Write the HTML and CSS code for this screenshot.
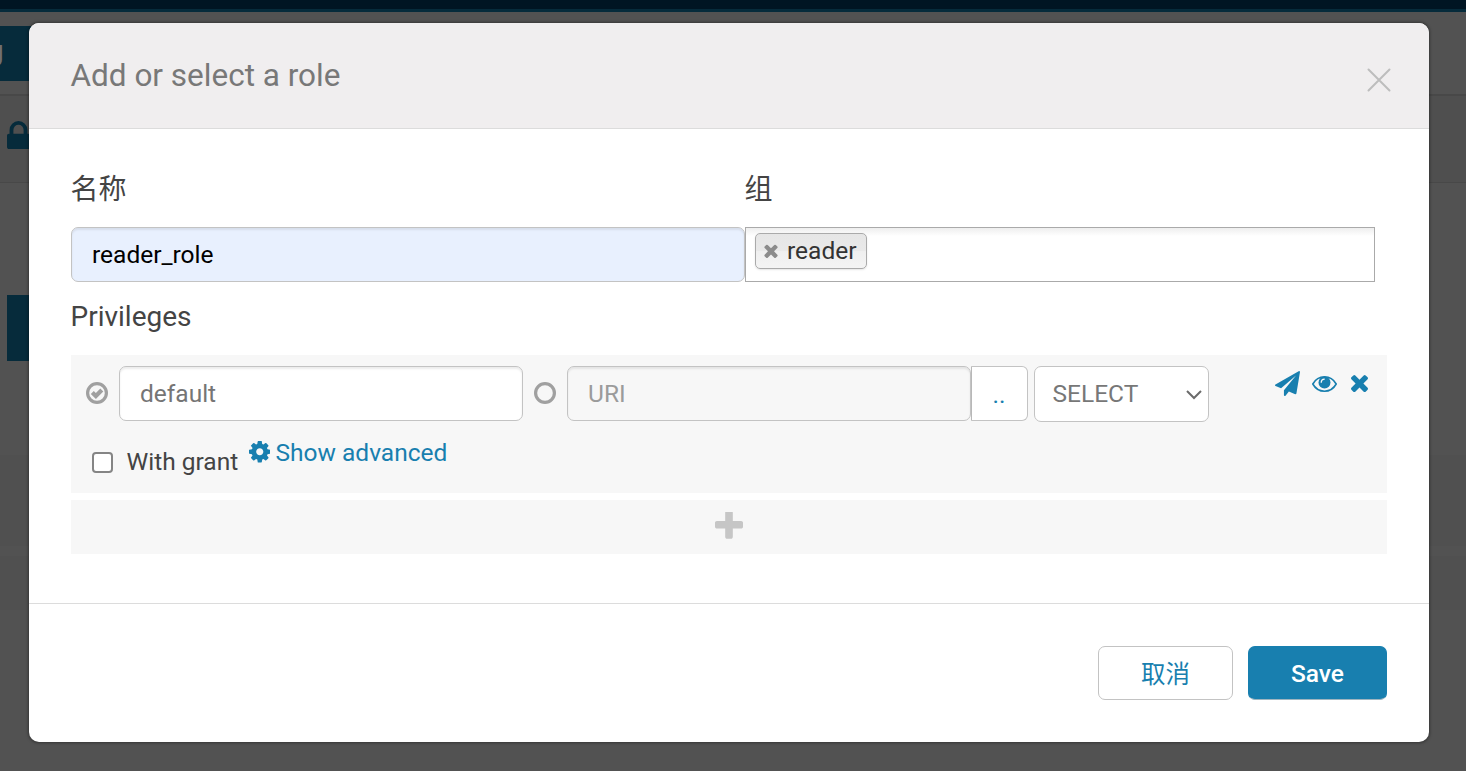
FILE: index.html
```html
<!DOCTYPE html>
<html lang="zh-CN">
<head>
<meta charset="utf-8">
<title>Add or select a role</title>
<link rel="stylesheet" href="styles.css">
</head>
<body>
<div class="page">
  <div class="topbar"></div>
  <div class="page-tabs"><div class="page-tab">g</div></div>
  <div class="page-title">
    <svg class="lock" viewBox="320 128 1152 1408" preserveAspectRatio="none"><path d="M640 768h512v-192q0-106-75-181t-181-75-181 75-75 181v192zm832 96v576q0 40-28 68t-68 28h-960q-40 0-68-28t-28-68v-576q0-40 28-68t68-28h32v-192q0-184 132-316t316-132 316 132 132 316v192h32q40 0 68 28t28 68z"/></svg>
  </div>
  <div class="page-block"></div>
  <div class="page-row row-one"></div>
  <div class="page-row row-two"></div>
</div>

<div class="modal">
  <header class="modal-header">
    <h2 class="modal-title">Add or select a role</h2>
    <svg class="close" viewBox="0 0 24 24"><path d="M1.5 1.5l21 21M22.5 1.5l-21 21"/></svg>
  </header>

  <div class="modal-body">
    <div class="fields">
      <div class="field">
        <div class="label">名称</div>
        <input class="input role-name" type="text" value="reader_role">
      </div>
      <div class="field">
        <div class="label">组</div>
        <div class="groups">
          <span class="chip">
            <svg class="chip-x" viewBox="302 302 1188 1252"><path d="M1490 1322q0 40-28 68l-136 136q-28 28-68 28t-68-28l-294-294-294 294q-28 28-68 28t-68-28l-136-136q-28-28-28-68t28-68l294-294-294-294q-28-28-28-68t28-68l136-136q28-28 68-28t68 28l294 294 294-294q28-28 68-28t68 28l136 136q28 28 28 68t-28 68l-294 294 294 294q28 28 28 68z"/></svg>
            <span>reader</span>
          </span>
        </div>
      </div>
    </div>

    <div class="label privileges-label">Privileges</div>

    <div class="privilege">
      <div class="privilege-main">
        <svg class="radio" viewBox="0 0 22 22"><circle cx="11" cy="11" r="9.4"/><path class="tick" d="M6.300 10.400l3.600 3.600 5.900-5.900"/></svg>
        <input class="input" type="text" placeholder="default">
        <svg class="radio radio-uri" viewBox="0 0 22 22"><circle cx="11" cy="11" r="9.4"/></svg>
        <input class="input uri" type="text" placeholder="URI" disabled>
        <div class="browse">..</div>
        <div class="select"><span>SELECT</span><svg class="caret" viewBox="0 0 16 10"><path d="M1 1l7 7 7-7"/></svg></div>
        <div class="actions">
          <svg class="plane" viewBox="0 0 1792 1792"><path d="M1764 11q33 24 27 64l-256 1536q-5 29-32 45-14 8-31 8-11 0-24-5l-453-185-242 295q-18 23-49 23-13 0-22-4-19-7-30.500-23.500t-11.500-36.500v-349l864-1059-1069 925-395-162q-37-14-40-55-2-40 32-59l1664-960q15-9 32-9 20 0 36 11z"/></svg>
          <svg class="eye" viewBox="0 0 25 16"><path class="lid" d="M.8 8C3.500 3.200 7.800.8 12.500.8S21.500 3.200 24.200 8c-2.700 4.800-7 7.200-11.700 7.200S3.500 12.800.8 8z"/><circle cx="12.500" cy="6.500" r="6"/><path class="glint" d="M9.200 6.300q.1-3 3.100-3.200"/></svg>
          <svg class="remove" viewBox="302 334 1188 1188"><path d="M1490 1322q0 40-28 68l-136 136q-28 28-68 28t-68-28l-294-294-294 294q-28 28-68 28t-68-28l-136-136q-28-28-28-68t28-68l294-294-294-294q-28-28-28-68t28-68l136-136q28-28 68-28t68 28l294 294 294-294q28-28 68-28t68 28l136 136q28 28 28 68t-28 68l-294 294 294 294q28 28 28 68z" transform="translate(0 -100)"/></svg>
        </div>
      </div>
      <div class="privilege-options">
        <span class="checkbox"></span>
        <span class="grant">With grant</span>
        <a class="advanced"><svg class="cog" viewBox="128 128 1536 1536"><path d="M1152 896q0-106-75-181t-181-75-181 75-75 181 75 181 181 75 181-75 75-181zm512-109v222q0 12-8 23t-20 13l-185 28q-19 54-39 91 35 50 107 138 10 12 10 25t-9 23q-27 37-99 108t-94 71q-12 0-26-9l-138-108q-44 23-91 38-16 136-29 186-7 28-36 28h-222q-14 0-24.500-8.500t-11.500-21.500l-28-184q-49-16-90-37l-141 107q-10 9-25 9-14 0-25-11-126-114-165-168-7-10-7-23 0-12 8-23 15-21 51-66.500t54-70.500q-27-50-41-99l-183-27q-13-2-21-12.500t-8-23.500v-222q0-12 8-23t19-13l186-28q14-46 39-92-40-57-107-138-10-12-10-24 0-10 9-23 26-36 98.500-107.500t94.500-71.500q13 0 26 10l138 107q44-23 91-38 16-136 29-186 7-28 36-28h222q14 0 24.500 8.500t11.500 21.500l28 184q49 16 90 37l142-107q9-9 24-9 13 0 25 10 129 119 165 170 7 8 7 22 0 12-8 23-15 21-51 66.500t-54 70.500q26 50 41 98l183 28q13 2 21 12.500t8 23.500z"/></svg><span>Show advanced</span></a>
      </div>
    </div>

    <div class="add">
      <svg class="plus" viewBox="192 192 1408 1408"><path d="M1600 736v192q0 40-28 68t-68 28h-416v416q0 40-28 68t-68 28h-192q-40 0-68-28t-28-68v-416h-416q-40 0-68-28t-28-68v-192q0-40 28-68t68-28h416v-416q0-40 28-68t68-28h192q40 0 68 28t28 68v416h416q40 0 68 28t28 68z"/></svg>
    </div>
  </div>

  <footer class="modal-footer">
    <div class="btn">取消</div>
    <div class="btn btn-primary">Save</div>
  </footer>
</div>
</body>
</html>
```
FILE: styles.css
```css
* { box-sizing: border-box; }
html, body { margin: 0; height: 771px; overflow: hidden; }
body {
  background: #525252;
  font-family: Roboto, "Noto Sans CJK SC", sans-serif;
  font-size: 24.5px;
  color: #444;
}
svg { display: block; flex: none; }

.page { position: absolute; inset: 0; overflow: hidden; }
.topbar { height: 12px; background: #001523; border-bottom: 3px solid #062b3b; }
.page-tabs { height: 84px; padding-top: 14px; border-bottom: 2px solid #484848; }
.page-tab {
  width: 40px; height: 55px;
  background: #062b3b; color: #707070;
  font-size: 28px; line-height: 49px; text-indent: -12px;
  overflow: hidden;
}
.page-title { height: 87px; padding: 25px 7px; background: #4f4f4f; border-bottom: 1px solid #484848; }
.lock { width: 23px; height: 28px; fill: #062b3b; }
.page-block { width: 40px; height: 66px; margin: 112px 0 0 7px; background: #062b3b; }
.page-row { background: #505050; }
.row-one { height: 91px; margin-top: 94px; }
.row-two { height: 54px; margin-top: 10px; }

.modal {
  position: absolute; left: 29px; top: 23px;
  width: 1400px; height: 719px;
  display: flex; flex-direction: column;
  background: #fff; border-radius: 10px; overflow: hidden;
  box-shadow: 0 0 3px 1px rgba(0, 0, 0, .35);
}
.modal-header {
  height: 106px; flex: none;
  display: flex; justify-content: space-between;
  padding: 33px 38px 0 41.500px;
  background: #f0eeef; border-bottom: 1px solid #dcdcdc;
}
.modal-title { margin: 0; font-size: 31.5px; font-weight: 400; line-height: 40px; color: #787878; }
.close { width: 24px; height: 24px; margin-top: 12px; stroke: #bdbdbd; stroke-width: 2; stroke-linecap: round; }

.modal-body { height: 474px; flex: none; padding: 42px 42px 0 41.500px; }
.fields { display: grid; grid-template-columns: 674px 630px; }
.label { height: 36px; line-height: 38px; font-size: 28px; }
.field .label { margin-bottom: 20px; }
.input {
  display: block; width: 100%; height: 55px; min-width: 0;
  padding: 0 20.500px; margin: 0;
  font: inherit; color: #000;
  background: #fff; border: 1px solid #c3c3c3; border-radius: 7px;
  box-shadow: inset 0 2px 2px rgba(0, 0, 0, .075);
  outline: 0;
}
.input::placeholder { color: #757575; opacity: 1; }
.role-name { background: #e8f0fe; }
.groups {
  height: 55px; padding: 5px 9px;
  border: 1px solid #aaa;
  background: linear-gradient(#eee 0, #fff 8px);
}
.chip {
  display: inline-flex; align-items: center; gap: 9.500px;
  width: 112px; height: 36px; padding: 0 0 0 8px;
  color: #333; line-height: 34px;
  border: 1px solid #aaa; border-radius: 5px;
  background: linear-gradient(#e6e6e6, #e9e9e9 50%, #efefef 50%, #f4f4f4);
  box-shadow: 0 1px 2px rgba(0, 0, 0, .1);
}
.chip-x { width: 14px; height: 14px; fill: #8c8c8c; }

.privileges-label { margin: 16px 0 21px; }
.privilege { width: 1316.500px; height: 138px; padding-top: 11px; background: #f7f7f7; }
.privilege-main {
  display: grid;
  grid-template-columns: 48px 404px 44px 404px 57px 175px 1fr;
  align-items: start;
}
.radio { width: 22px; height: 22px; margin: 16px 0 0 15.500px; fill: none; stroke: #a0a0a0; stroke-width: 3.200; }
.radio-uri { margin-left: 11.500px; }
.tick { stroke-width: 4.200; }
.uri { background: #f7f7f7; }
.uri::placeholder { color: #9b9b9b; }
.browse {
  height: 55px; line-height: 55px; text-align: center; color: #187faf;
  background: #fff; border: 1px solid #c3c3c3; border-left-color: #b8b8b8;
  border-radius: 0 6px 6px 0;
}
.select {
  width: 175px; height: 56px; margin-left: 6px; padding: 0 6px 0 18px;
  display: flex; align-items: center; justify-content: space-between;
  line-height: 52px; color: #777;
  background: #fff; border: 1px solid #c3c3c3; border-radius: 7px;
}
.caret { width: 16px; height: 10px; margin-top: 2px; fill: none; stroke: #6b6b6b; stroke-width: 2; }
.actions { display: flex; justify-content: flex-end; padding: 4px 19px 0 0; fill: #187faf; }
.plane { width: 25px; height: 25px; margin-top: 1px; }
.eye { width: 25px; height: 16px; margin: 6px 14px 0 12.500px; }
.lid { fill: none; stroke: #187faf; stroke-width: 1.600; }
.glint { fill: none; stroke: #f7f7f7; stroke-width: 1.200; stroke-linecap: round; }
.remove { width: 17px; height: 17px; margin-top: 6px; overflow: visible; }

.privilege-options { display: flex; align-items: flex-start; padding: 15px 0 0 21.500px; line-height: 32px; }
.checkbox { width: 21px; height: 21px; margin: 15px 13.500px 0 0; border: 2px solid #858585; border-radius: 4px; background: #fff; }
.grant { margin-top: 9px; width: 122px; white-space: nowrap; }
.advanced { display: flex; align-items: center; gap: 5.500px; color: #187faf; }
.cog { width: 21.500px; height: 21.500px; margin-top: -2px; fill: #187faf; }

.add { width: 1316.500px; height: 54px; margin-top: 7px; padding-top: 11.500px; background: #f7f7f7; }
.plus { width: 28px; height: 28px; margin: 0 auto; fill: #c6c6c6; }

.modal-footer {
  flex: 1; display: flex; justify-content: flex-end; gap: 15px;
  padding: 42px 42px 0 0; border-top: 1px solid #dcdcdc;
}
.btn {
  width: 135px; height: 54px; line-height: 55px; text-align: center;
  color: #187faf; border: 1px solid #c3c3c3; border-radius: 7px;
}
.btn-primary { width: 139px; line-height: 53px; color: #fff; background: #187faf; border-color: #187faf #187faf #9fb5c0; font-weight: 500; }
```
